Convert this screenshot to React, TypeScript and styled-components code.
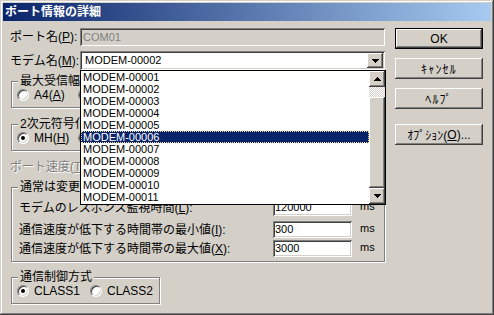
import React from 'react';
import styled, { createGlobalStyle, css } from 'styled-components';

const GlobalStyle = createGlobalStyle`
  html, body {
    margin: 0;
    padding: 0;
    background: #d4d0c8;
  }
  body {
    font-family: "Liberation Sans", "Noto Sans CJK JP", sans-serif;
    font-size: 12px;
    color: #000;
  }
  u {
    text-underline-offset: 1px;
  }
`;

const raised = css`
  box-shadow: inset -1px -1px #404040, inset 1px 1px #ffffff, inset -2px -2px #808080, inset 2px 2px #d4d0c8;
`;

const sunken = css`
  box-shadow: inset 1px 1px #808080, inset -1px -1px #ffffff, inset 2px 2px #404040, inset -2px -2px #d4d0c8;
`;

const Window = styled.div`
  position: relative;
  width: 494px;
  height: 315px;
  box-sizing: border-box;
  padding: 3px;
  background: #d4d0c8;
  box-shadow: inset -1px -1px #404040, inset 1px 1px #d4d0c8, inset -2px -2px #808080, inset 2px 2px #ffffff;
  display: flex;
  flex-direction: column;
`;

const TitleBar = styled.div`
  height: 18px;
  line-height: 18px;
  padding-left: 2px;
  color: #fff;
  font-weight: bold;
  font-size: 12px;
  background: linear-gradient(90deg, #0a246a, #a6caf0);
  white-space: nowrap;
`;

const Client = styled.div`
  flex: 1;
  display: flex;
  gap: 9px;
  padding: 7px 8px 0 7px;
`;

const LeftColumn = styled.div`
  width: 376px;
  display: flex;
  flex-direction: column;
`;

const RightColumn = styled.div`
  width: 88px;
  display: flex;
  flex-direction: column;
`;

const FieldRow = styled.div<{ $h: number; $mt?: number }>`
  display: flex;
  align-items: center;
  height: ${p => p.$h}px;
  margin-top: ${p => p.$mt ?? 0}px;
`;

const FieldLabel = styled.span`
  width: 70px;
  white-space: nowrap;
  line-height: 14px;
`;

const TextBox = styled.div<{ $disabled?: boolean }>`
  width: 305px;
  height: 18px;
  box-sizing: border-box;
  padding-left: 3px;
  line-height: 18px;
  font-size: 11px;
  background: ${p => (p.$disabled ? '#d4d0c8' : '#fff')};
  color: ${p => (p.$disabled ? '#808080' : '#000')};
  ${sunken}
`;

const Combo = styled.div`
  width: 305px;
  height: 19px;
  box-sizing: border-box;
  padding: 2px;
  display: flex;
  background: #fff;
  ${sunken}
`;

const ComboText = styled.span`
  flex: 1;
  padding-left: 3px;
  font-size: 11px;
  line-height: 15px;
`;

const ArrowButton = styled.div<{ $h?: number }>`
  width: 16px;
  height: ${p => p.$h ?? 16}px;
  flex: none;
  display: flex;
  align-items: center;
  justify-content: center;
  background: #d4d0c8;
  ${raised}
`;

const Group = styled.div<{ $mt: number; $w: number; $h: number }>`
  position: relative;
  margin-top: ${p => p.$mt}px;
  margin-left: 1px;
  width: ${p => p.$w}px;
  height: ${p => p.$h}px;
  box-sizing: border-box;
  border: 1px solid #808080;
  box-shadow: inset 1px 1px #ffffff, 1px 1px #ffffff;
`;

const GroupTitle = styled.span`
  position: absolute;
  top: -8px;
  left: 6px;
  padding: 0 2px;
  line-height: 14px;
  background: #d4d0c8;
  white-space: nowrap;
`;

const RadioRow = styled.div`
  height: 100%;
  display: flex;
  align-items: center;
  padding: 1px 0 0 5px;
  box-sizing: border-box;
`;

const RadioItem = styled.label<{ $w: number }>`
  width: ${p => p.$w}px;
  display: flex;
  align-items: center;
  gap: 5px;
  white-space: nowrap;
  line-height: 14px;
`;

const RadioDot = styled.span<{ $checked?: boolean }>`
  position: relative;
  width: 12px;
  height: 12px;
  box-sizing: border-box;
  border-radius: 50%;
  border: 1px solid;
  border-color: #808080 #ffffff #ffffff #808080;
  background: #fff;
  box-shadow: inset 1px 1px #404040, inset -1px -1px #d4d0c8;
  &::after {
    content: '';
    display: ${p => (p.$checked ? 'block' : 'none')};
    position: absolute;
    left: 3px;
    top: 3px;
    width: 4px;
    height: 4px;
    border-radius: 50%;
    background: #000;
  }
`;

const DisabledLabel = styled.div`
  margin-top: 9px;
  height: 14px;
  line-height: 14px;
  color: #808080;
  text-shadow: 1px 1px #ffffff;
`;

const SettingsBody = styled.div`
  padding-left: 7px;
  display: flex;
  flex-direction: column;
`;

const SettingRow = styled.div<{ $mt: number }>`
  display: flex;
  align-items: center;
  height: 17px;
  margin-top: ${p => p.$mt}px;
`;

const SettingLabel = styled.span`
  width: 254px;
  white-space: nowrap;
  line-height: 14px;
`;

const NumberBox = styled.div`
  width: 79px;
  height: 17px;
  box-sizing: border-box;
  padding-left: 2px;
  background: #fff;
  font-size: 11px;
  line-height: 17px;
  ${sunken}
`;

const Unit = styled.span`
  align-self: flex-start;
  margin-left: 8px;
  line-height: 14px;
  font-size: 11px;
`;

const Button = styled.div<{ $mt: number; $default?: boolean; $spacing?: number }>`
  height: 21px;
  margin-top: ${p => p.$mt}px;
  display: flex;
  align-items: center;
  justify-content: center;
  white-space: nowrap;
  font-weight: normal;
  letter-spacing: ${p => p.$spacing ?? 0}px;
  background: #d4d0c8;
  ${p =>
    p.$default
      ? css`
          box-shadow: inset 0 0 0 1px #000, inset -2px -2px #404040, inset 2px 2px #ffffff,
            inset -3px -3px #808080;
        `
      : raised}
`;

const DropList = styled.div`
  position: absolute;
  left: 80px;
  top: 70px;
  width: 306px;
  height: 135px;
  box-sizing: border-box;
  border: 1px solid #000;
  background: #fff;
  display: flex;
`;

const Items = styled.div`
  flex: 1;
  display: flex;
  flex-direction: column;
  overflow: hidden;
`;

const Item = styled.div<{ $selected?: boolean }>`
  height: 12px;
  line-height: 12px;
  padding-left: 2px;
  font-size: 11px;
  white-space: nowrap;
  ${p =>
    p.$selected &&
    css`
      background: #0a246a;
      color: #fff;
      outline: 1px dotted #f5db95;
      outline-offset: -1px;
    `}
`;

const ScrollBar = styled.div`
  width: 16px;
  display: flex;
  flex-direction: column;
`;

const ScrollTrack = styled.div`
  height: 10px;
  background-color: #fff;
  background-image: conic-gradient(#d4d0c8 25%, #fff 0 50%, #d4d0c8 0 75%, #fff 0);
  background-size: 2px 2px;
`;

const ScrollThumb = styled.div`
  flex: 1;
  background: #d4d0c8;
  ${raised}
`;

const Arrow = ({ up }: { up?: boolean }) => (
  <svg width="7" height="4" viewBox="0 0 7 4" shapeRendering="crispEdges" style={{ transform: up ? 'rotate(180deg)' : undefined }}>
    <path d="M0 0h7v1H0zM1 1h5v1H1zM2 2h3v1H2zM3 3h1v1H3z" fill="#000" />
  </svg>
);

const modems = Array.from({ length: 11 }, (_, i) => `MODEM-${String(i + 1).padStart(5, '0')}`);

const App = () => {
  return (
    <>
      <GlobalStyle />
      <Window>
        <TitleBar>ポート情報の詳細</TitleBar>
        <Client>
          <LeftColumn>
            <FieldRow $h={18}>
              <FieldLabel>
                ポート名(<u>P</u>):
              </FieldLabel>
              <TextBox $disabled>COM01</TextBox>
            </FieldRow>
            <FieldRow $h={19} $mt={5}>
              <FieldLabel>
                モデム名(<u>M</u>):
              </FieldLabel>
              <Combo>
                <ComboText>MODEM-00002</ComboText>
                <ArrowButton $h={15}>
                  <Arrow />
                </ArrowButton>
              </Combo>
            </FieldRow>

            <Group $mt={11} $w={200} $h={27}>
              <GroupTitle>最大受信幅</GroupTitle>
              <RadioRow>
                <RadioItem $w={61}>
                  <RadioDot />
                  <span>
                    A4(<u>A</u>)
                  </span>
                </RadioItem>
                <RadioItem $w={60}>
                  <RadioDot />
                  <span>
                    B4(<u>B</u>)
                  </span>
                </RadioItem>
              </RadioRow>
            </Group>

            <Group $mt={16} $w={200} $h={27}>
              <GroupTitle>2次元符号化</GroupTitle>
              <RadioRow>
                <RadioItem $w={61}>
                  <RadioDot $checked />
                  <span>
                    MH(<u>H</u>)
                  </span>
                </RadioItem>
                <RadioItem $w={60}>
                  <RadioDot />
                  <span>
                    MR(<u>R</u>)
                  </span>
                </RadioItem>
              </RadioRow>
            </Group>

            <DisabledLabel>
              ポート速度(<u>T</u>):
            </DisabledLabel>

            <Group $mt={13} $w={374} $h={75}>
              <GroupTitle>通常は変更しないでください</GroupTitle>
              <SettingsBody>
                <SettingRow $mt={11}>
                  <SettingLabel>
                    モデムのレスポンス監視時間(<u>L</u>):
                  </SettingLabel>
                  <NumberBox>120000</NumberBox>
                  <Unit>ms</Unit>
                </SettingRow>
                <SettingRow $mt={5}>
                  <SettingLabel>
                    通信速度が低下する時間帯の最小値(<u>I</u>):
                  </SettingLabel>
                  <NumberBox>300</NumberBox>
                  <Unit>ms</Unit>
                </SettingRow>
                <SettingRow $mt={2}>
                  <SettingLabel>
                    通信速度が低下する時間帯の最大値(<u>X</u>):
                  </SettingLabel>
                  <NumberBox>3000</NumberBox>
                  <Unit>ms</Unit>
                </SettingRow>
              </SettingsBody>
            </Group>

            <Group $mt={15} $w={149} $h={27}>
              <GroupTitle>通信制御方式</GroupTitle>
              <RadioRow>
                <RadioItem $w={73}>
                  <RadioDot $checked />
                  <span>CLASS1</span>
                </RadioItem>
                <RadioItem $w={64}>
                  <RadioDot />
                  <span>CLASS2</span>
                </RadioItem>
              </RadioRow>
            </Group>
          </LeftColumn>

          <RightColumn>
            <Button $mt={0} $default>
              OK
            </Button>
            <Button $mt={9} $spacing={1.2}>
              ｷｬﾝｾﾙ
            </Button>
            <Button $mt={9} $spacing={1.2}>
              ﾍﾙﾌﾟ
            </Button>
            <Button $mt={15}>
              ｵﾌﾟｼｮﾝ(<u>O</u>)...
            </Button>
          </RightColumn>
        </Client>

        <DropList>
          <Items>
            {modems.map(m => (
              <Item key={m} $selected={m === 'MODEM-00006'}>
                {m}
              </Item>
            ))}
          </Items>
          <ScrollBar>
            <ArrowButton>
              <Arrow up />
            </ArrowButton>
            <ScrollTrack />
            <ScrollThumb />
            <ArrowButton>
              <Arrow />
            </ArrowButton>
          </ScrollBar>
        </DropList>
      </Window>
    </>
  );
};

export default App;
